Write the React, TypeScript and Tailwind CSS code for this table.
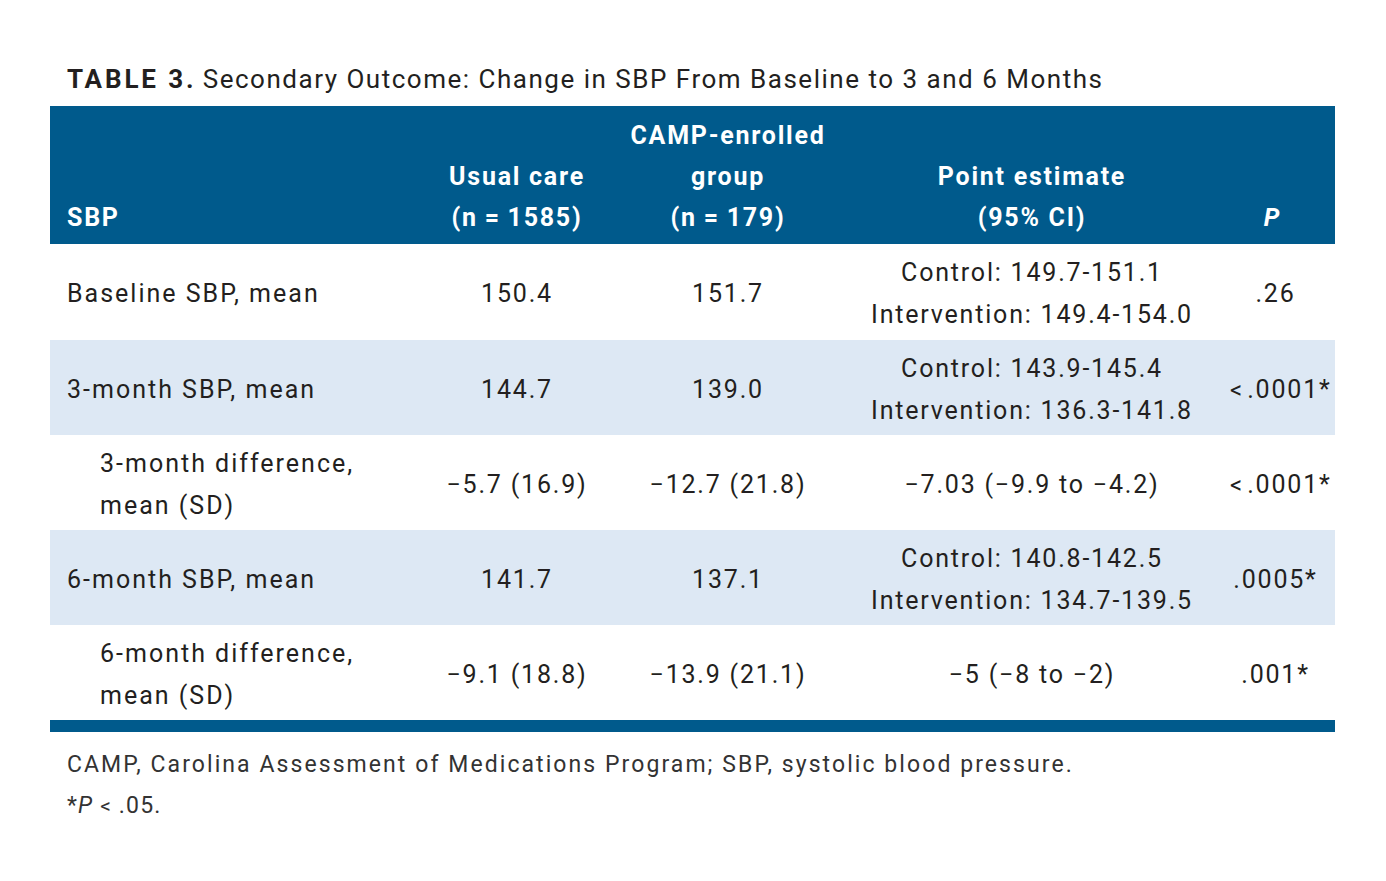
import React from 'react';

type Row = {
  label: string[];
  indent?: boolean;
  usual: string;
  camp: string;
  estimate: string[];
  p: string;
  lt?: boolean;
  shaded?: boolean;
};

const rows: Row[] = [
  {
    label: ['Baseline SBP, mean'],
    usual: '150.4',
    camp: '151.7',
    estimate: ['Control: 149.7-151.1', 'Intervention: 149.4-154.0'],
    p: '.26',
  },
  {
    label: ['3-month SBP, mean'],
    usual: '144.7',
    camp: '139.0',
    estimate: ['Control: 143.9-145.4', 'Intervention: 136.3-141.8'],
    p: '.0001*',
    lt: true,
    shaded: true,
  },
  {
    label: ['3-month difference,', 'mean (SD)'],
    indent: true,
    usual: '\u22125.7 (16.9)',
    camp: '\u221212.7 (21.8)',
    estimate: ['\u22127.03 (\u22129.9 to \u22124.2)'],
    p: '.0001*',
    lt: true,
  },
  {
    label: ['6-month SBP, mean'],
    usual: '141.7',
    camp: '137.1',
    estimate: ['Control: 140.8-142.5', 'Intervention: 134.7-139.5'],
    p: '.0005*',
    shaded: true,
  },
  {
    label: ['6-month difference,', 'mean (SD)'],
    indent: true,
    usual: '\u22129.1 (18.8)',
    camp: '\u221213.9 (21.1)',
    estimate: ['\u22125 (\u22128 to \u22122)'],
    p: '.001*',
  },
];

const cols = 'grid grid-cols-[362px_210px_212px_396px_105px]';

export default function App() {
  return (
    <div
      className="min-h-[881px] w-[1386px] bg-white text-[#231f20]"
      style={{ fontFamily: 'Roboto, "Liberation Sans", sans-serif' }}
    >
      <div className="pl-[50px] pr-[51px] pt-[62px]">
        <h1 className="pl-[17px] text-[26px] leading-[34px] pb-[10px] whitespace-nowrap">
          <span className="font-bold tracking-[0.11em]">TABLE 3.</span>{' '}
          <span className="tracking-[0.058em]">
            Secondary Outcome: Change in SBP From Baseline to 3 and 6 Months
          </span>
        </h1>

        <div
          className={`${cols} h-[138px] bg-[#005a8c] text-white font-bold text-[25px] leading-[41px] tracking-[0.07em] items-end pb-[6px] whitespace-nowrap`}
        >
          <div className="pl-[17px]">SBP</div>
          <div className="text-center">
            Usual care
            <br />
            (n{'\u2009'}={'\u2009'}1585)
          </div>
          <div className="text-center">
            CAMP-enrolled
            <br />
            group
            <br />
            (n{'\u2009'}={'\u2009'}179)
          </div>
          <div className="text-center">
            Point estimate
            <br />
            (95% CI)
          </div>
          <div className="text-center pr-[20px] italic">P</div>
        </div>

        {rows.map((r, i) => (
          <div
            key={i}
            className={`${cols} ${i === 0 ? 'h-[96px]' : 'h-[95px]'} items-center text-[25px] leading-[42px] tracking-[0.072em] whitespace-nowrap pt-[4px] ${r.shaded ? 'bg-[#dde8f4]' : 'bg-white'}`}
          >
            <div className={r.indent ? 'pl-[33px]' : ''}>
              <div className="pl-[17px] tracking-[0.08em]">
                {r.label.map((l, j) => (
                  <div key={j}>{l}</div>
                ))}
              </div>
            </div>
            <div className="text-center">{r.usual}</div>
            <div className="text-center">{r.camp}</div>
            <div className="text-center">
              {r.estimate.map((l, j) => (
                <div key={j}>{l}</div>
              ))}
            </div>
            <div className="text-center pr-[14px]">
              {r.lt && <span className="inline-block mr-[5px] text-[24px] leading-none tracking-normal">&lt;</span>}
              {r.p}
            </div>
          </div>
        ))}

        <div className="h-[12px] bg-[#005a8c]" />

        <div className="pl-[17px] pt-[12px] text-[23px] leading-[41px] tracking-[0.09em] text-[#333] whitespace-nowrap">
          <div>CAMP, Carolina Assessment of Medications Program; SBP, systolic blood pressure.</div>
          <div className="tracking-[0.05em]">
            *<span className="italic">P</span>{' '}
            <span className="inline-block text-[21px] leading-none">&lt;</span> .05.
          </div>
        </div>
      </div>
    </div>
  );
}
